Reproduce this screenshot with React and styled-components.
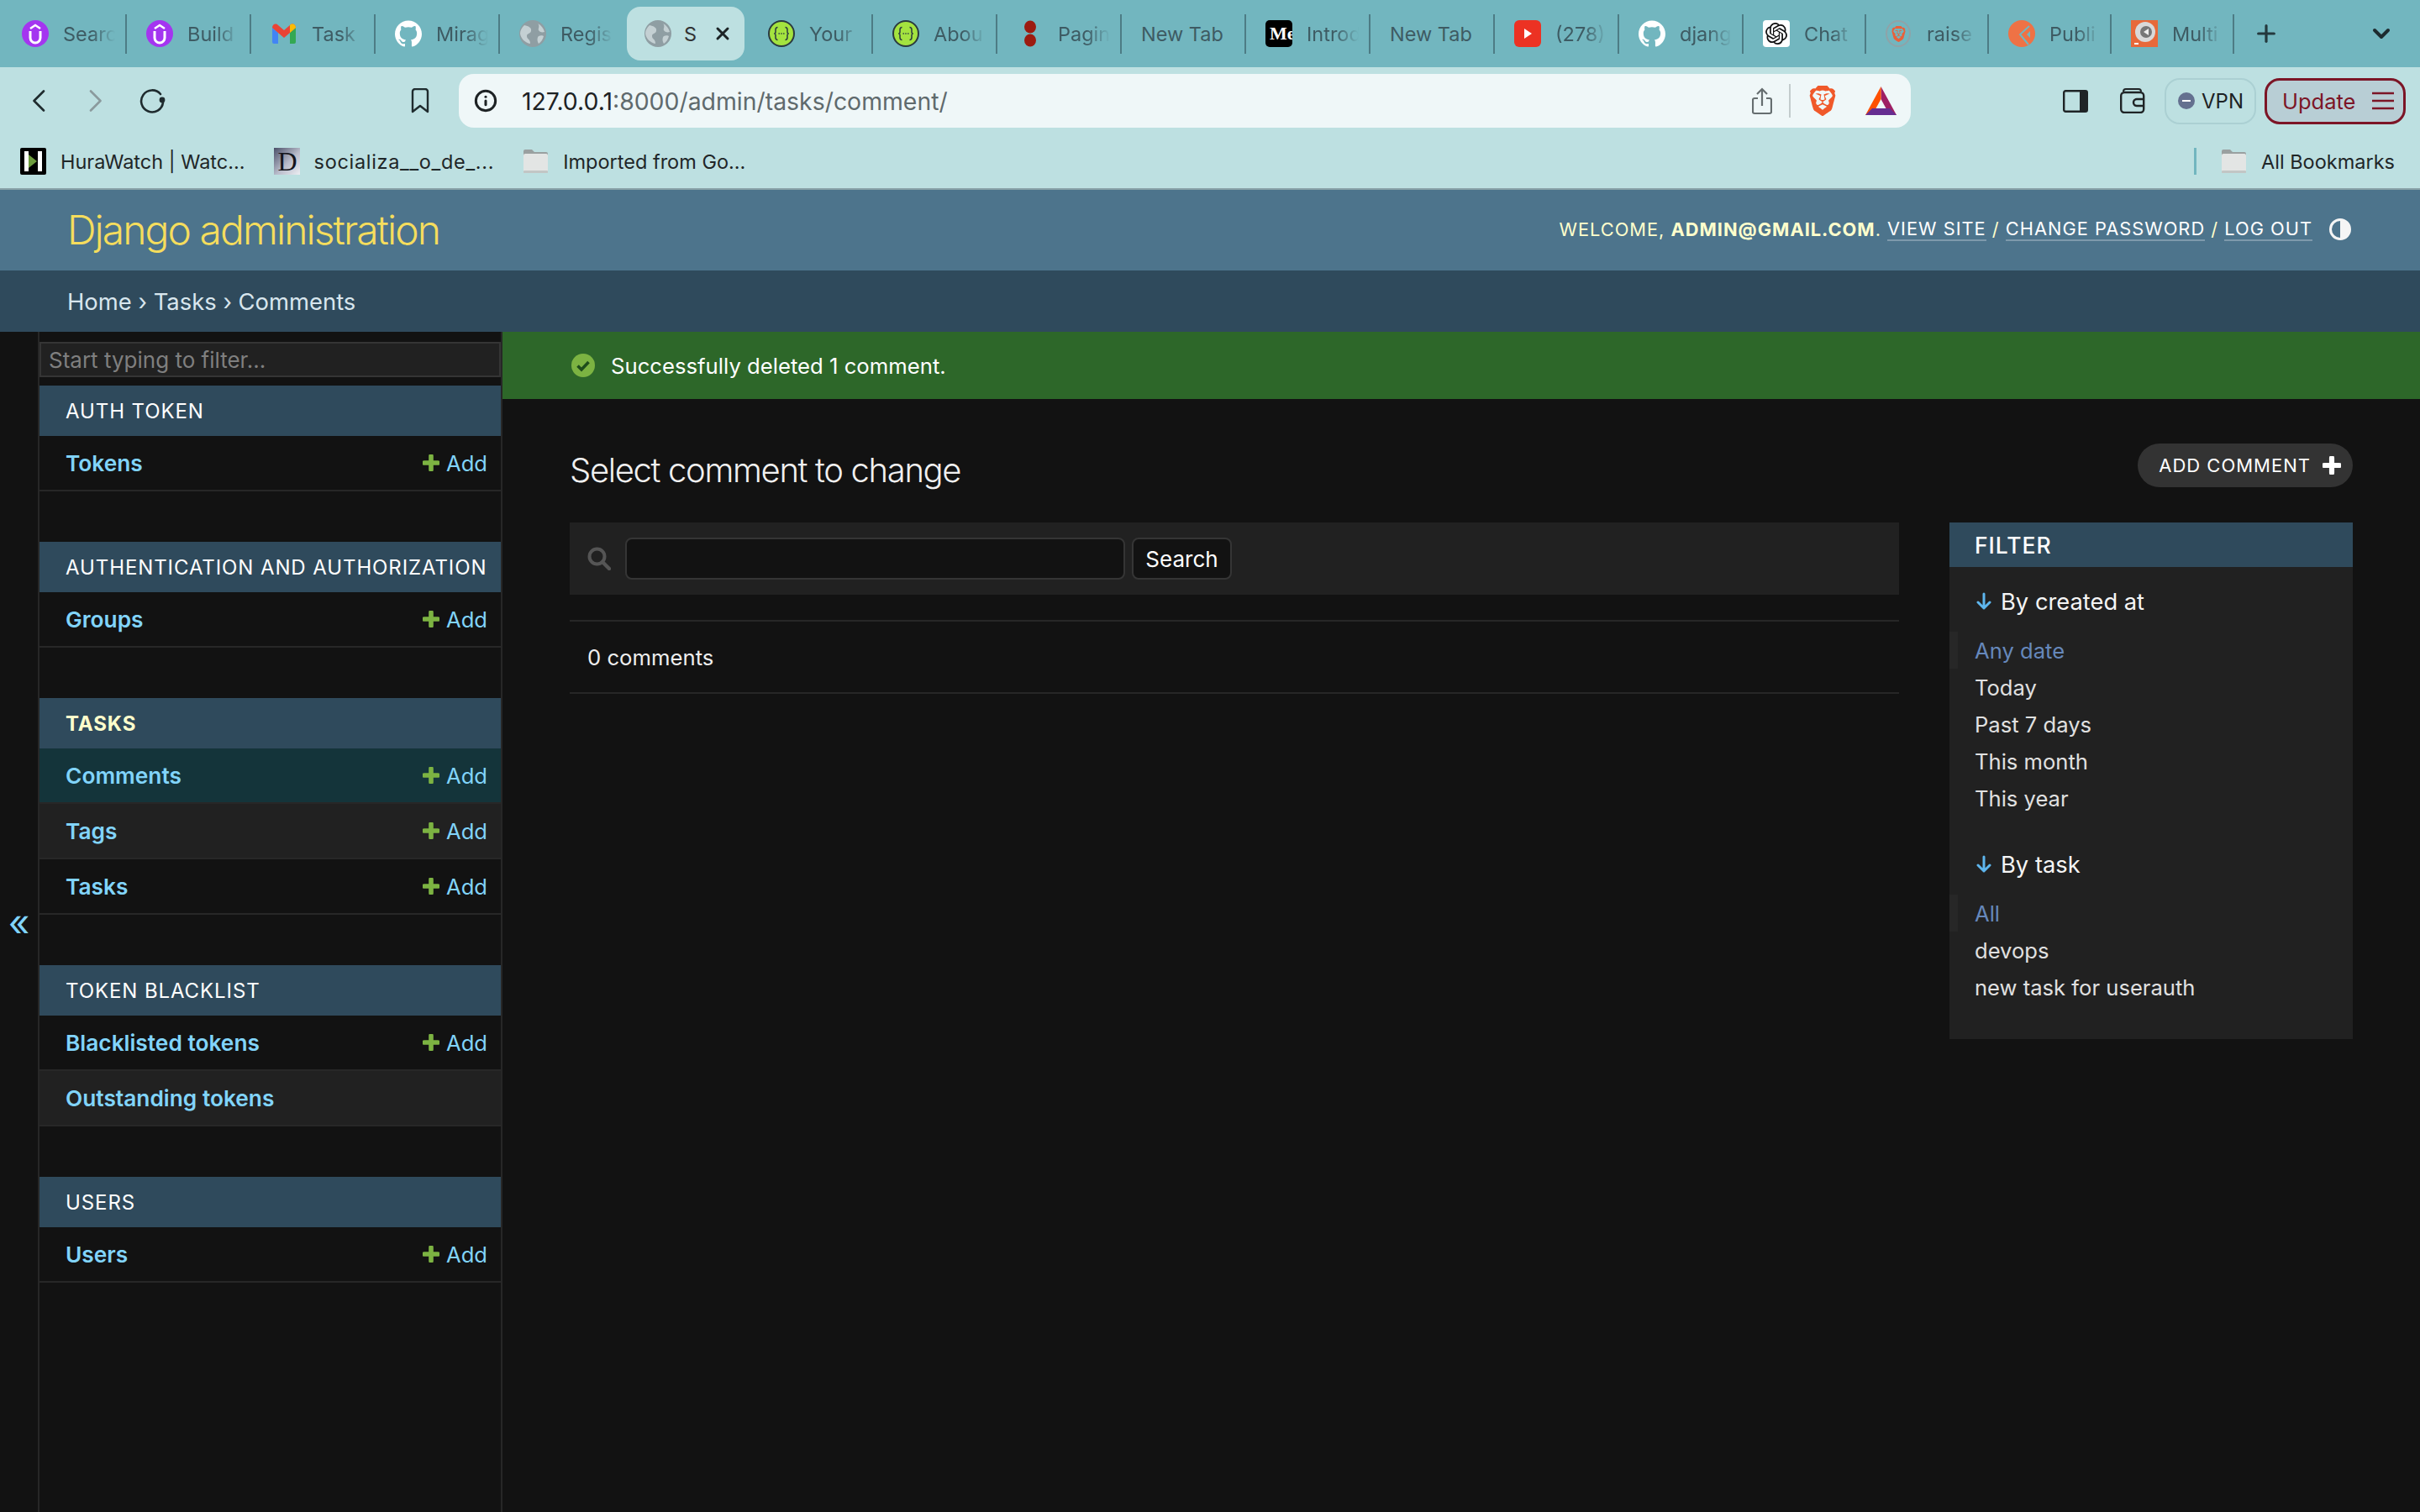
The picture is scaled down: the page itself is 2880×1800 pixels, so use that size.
import React from "react";
import styled, { createGlobalStyle } from "styled-components";
import { SiGithub, SiOpenai, SiBrave } from "react-icons/si";
import { X, Plus, ChevronDown, Info } from "lucide-react";

const GlobalStyle = createGlobalStyle`
  html, body {
    margin: 0;
    padding: 0;
    background: #121212;
  }
  body {
    font-family: Inter, "Liberation Sans", sans-serif;
    color: #eeeeee;
  }
  * {
    box-sizing: border-box;
  }
`;

const Page = styled.div`
  display: flex;
  flex-direction: column;
  width: 2880px;
  height: 1800px;
  overflow: hidden;
`;

/* browser chrome */
const TabStrip = styled.div`
  display: flex;
  align-items: center;
  height: 80px;
  padding-left: 3px;
  background: #72b6bf;
`;

const Tab = styled.div`
  display: flex;
  align-items: center;
  flex: none;
  gap: 17px;
  width: ${(p) => p.$width || 148}px;
  height: 47px;
  padding: 0 12px 0 23px;
  border-right: 2px solid ${(p) => (p.$noSep ? "transparent" : "#4d7c85")};
`;

const ActiveTab = styled.div`
  display: flex;
  align-items: center;
  flex: none;
  gap: 15px;
  width: 140px;
  height: 64px;
  margin: 0 5px 0 3px;
  padding: 0 14px 0 21px;
  border-radius: 16px;
  background: #bde0e1;
`;

const TabLabel = styled.span`
  flex: 1;
  overflow: hidden;
  font-size: 23.5px;
  white-space: nowrap;
  color: ${(p) => (p.$active ? "#333333" : "#3e5b63")};
  ${(p) =>
    p.$fade &&
    "mask-image: linear-gradient(to right, #000 55%, transparent 100%);"}
`;

const NewTabButton = styled.div`
  display: flex;
  margin-left: 22px;
  color: #24393e;
`;

const TabMenu = styled.div`
  display: flex;
  margin-left: 105px;
  color: #1d2b2f;
`;

const Chrome = styled.div`
  display: flex;
  flex-direction: column;
  height: 146px;
  border-bottom: 2px solid #8aa3a8;
  background: #bde0e1;
`;

const ToolRow = styled.div`
  display: flex;
  align-items: center;
  height: 80px;
`;

const NavGroup = styled.div`
  display: flex;
  align-items: center;
  flex: none;
  width: 546px;
  padding: 0 35px 0 38px;
  color: #1f2b2e;
`;

const NavButton = styled.div`
  display: flex;
  margin-right: ${(p) => p.$gap || 0}px;
`;

const BookmarkButton = styled.div`
  display: flex;
  margin-left: auto;
`;

const UrlBar = styled.div`
  display: flex;
  align-items: center;
  flex: none;
  width: 1728px;
  height: 64px;
  padding: 0 17px 0 18px;
  border-radius: 18px;
  background: #eff7f8;
`;

const UrlText = styled.div`
  flex: 1;
  margin-left: 29px;
  font-size: 28.4px;
  color: #5f6a6d;
`;

const UrlHost = styled.span`
  color: #1d2224;
`;

const UrlDivider = styled.div`
  width: 2px;
  height: 40px;
  margin: 0 20px;
  background: #c3cccd;
`;

const BatSlot = styled.div`
  display: flex;
  margin-left: 33px;
`;

const RightTools = styled.div`
  display: flex;
  align-items: center;
  justify-content: flex-end;
  flex: 1;
  padding-right: 17px;
`;

const WalletSlot = styled.div`
  display: flex;
  margin-left: 38px;
`;

const VpnPill = styled.div`
  display: flex;
  align-items: center;
  gap: 8px;
  width: 109px;
  height: 55px;
  margin: 0 10px 0 23px;
  padding-left: 14px;
  border: 2px solid #abd0d3;
  border-radius: 18px;
  font-size: 24px;
  color: #1d2224;
`;

const VpnDot = styled.span`
  display: flex;
  align-items: center;
  justify-content: center;
  width: 20px;
  height: 20px;
  border-radius: 50%;
  background: #64708f;
`;

const VpnDash = styled.span`
  width: 10px;
  height: 2px;
  background: #ffffff;
`;

const UpdateButton = styled.div`
  display: flex;
  align-items: center;
  justify-content: space-between;
  width: 168px;
  height: 55px;
  padding: 0 10px 0 18px;
  border: 3px solid #7c1526;
  border-radius: 18px;
  background: #b8ced5;
  font-size: 25.5px;
  color: #7c1526;
`;

const BookmarkRow = styled.div`
  display: flex;
  align-items: center;
  gap: 34px;
  height: 64px;
  padding: 0 30px 0 24px;
`;

const Bookmark = styled.div`
  display: flex;
  align-items: center;
  gap: 17px;
  font-size: 23.5px;
  letter-spacing: ${(p) => (p.$wide ? "0.68px" : "normal")};
  color: #1f2628;
`;

const BookmarkEnd = styled.div`
  display: flex;
  align-items: center;
  gap: 29px;
  margin-left: auto;
`;

const BookmarkSep = styled.div`
  width: 3px;
  height: 32px;
  background: #72b6bf;
`;

/* django header */
const Header = styled.header`
  display: flex;
  align-items: center;
  justify-content: space-between;
  height: 96px;
  padding: 0 82px 2px 80px;
  background: #4d748c;
`;

const Branding = styled.h1`
  margin: 0;
  font-size: 48px;
  font-weight: 300;
  letter-spacing: -1.95px;
  color: #f5dd5d;
`;

const UserTools = styled.div`
  display: flex;
  align-items: center;
  font-size: 21.8px;
  letter-spacing: 1px;
  text-transform: uppercase;
  color: #ffffcc;
  white-space: pre;
`;

const UserName = styled.strong`
  font-weight: 700;
`;

const UserLink = styled.a`
  border-bottom: 2px solid rgba(255, 255, 255, 0.28);
  color: #ffffff;
`;

const ThemeToggle = styled.svg`
  margin-left: 20px;
`;

const Breadcrumbs = styled.div`
  display: flex;
  align-items: center;
  height: 73px;
  padding-left: 80px;
  background: #2f4a5c;
  font-size: 27.4px;
  color: #d8e6ee;
`;

/* page body */
const Body = styled.div`
  display: flex;
  flex: 1;
  min-height: 0;
`;

const Toggle = styled.div`
  display: flex;
  align-items: center;
  justify-content: center;
  flex: none;
  width: 45px;
  font-size: 44px;
  color: #81d4fa;
`;

const Sidebar = styled.nav`
  flex: none;
  width: 553px;
  border-left: 2px solid #272727;
  border-right: 2px solid #272727;
`;

const FilterInput = styled.input`
  display: block;
  width: 100%;
  height: 42px;
  margin: 12px 0 10px;
  padding: 0 9px;
  border: 2px solid #353535;
  background: #212121;
  font-family: inherit;
  font-size: 26px;
  color: #eeeeee;

  &::placeholder {
    color: #7f7f7f;
  }
`;

const AppSection = styled.section`
  margin-bottom: 60px;
`;

const AppCaption = styled.div`
  display: flex;
  align-items: center;
  height: 60px;
  padding-left: 31px;
  background: #2f4a5c;
  font-size: 24px;
  font-weight: ${(p) => (p.$current ? 700 : 400)};
  letter-spacing: 0.9px;
  white-space: nowrap;
  color: ${(p) => (p.$current ? "#ffffcc" : "#ffffff")};
`;

const rowBackground = (p) => {
  if (p.$current) return "#14343a";
  return p.$striped ? "#212121" : "#121212";
};

const ModelRow = styled.div`
  display: flex;
  align-items: center;
  justify-content: space-between;
  height: 66px;
  padding: 0 16px 0 31px;
  border-bottom: 2px solid #272727;
  background: ${rowBackground};
`;

const ModelName = styled.a`
  font-size: 26.3px;
  font-weight: 600;
  color: #81d4fa;
`;

const AddLink = styled.a`
  display: flex;
  align-items: center;
  gap: 8px;
  font-size: 25.6px;
  color: #81d4fa;
`;

const Main = styled.main`
  display: flex;
  flex-direction: column;
  flex: 1;
  min-width: 0;
`;

const Message = styled.div`
  display: flex;
  align-items: center;
  gap: 19px;
  height: 80px;
  padding-left: 82px;
  background: #2d6729;
  font-size: 25.7px;
  color: #ffffff;
`;

const Content = styled.div`
  padding: 53px 80px 0 80px;
`;

const TitleRow = styled.div`
  display: flex;
  align-items: flex-start;
  justify-content: space-between;
  height: 94px;
`;

const Title = styled.h1`
  margin: 6px 0 0;
  font-size: 40px;
  font-weight: 300;
  line-height: 52px;
  letter-spacing: -1.35px;
  color: #f0f0f0;
`;

const AddButton = styled.a`
  display: flex;
  align-items: center;
  gap: 14px;
  height: 52px;
  padding: 0 14px 0 25px;
  border-radius: 26px;
  background: #333333;
  font-size: 22px;
  letter-spacing: 1px;
  color: #ffffff;
`;

const Columns = styled.div`
  display: flex;
  gap: 60px;
`;

const Results = styled.div`
  flex: 1;
  min-width: 0;
`;

const SearchBar = styled.div`
  display: flex;
  align-items: center;
  height: 86px;
  margin-bottom: 30px;
  padding-left: 21px;
  background: #212121;
`;

const SearchInput = styled.input`
  width: 595px;
  height: 50px;
  margin: 0 8px 0 17px;
  border: 2px solid #353535;
  border-radius: 8px;
  background: #121212;
`;

const SearchButton = styled.button`
  width: 119px;
  height: 50px;
  padding: 0;
  border: 2px solid #353535;
  border-radius: 8px;
  background: #121212;
  font-family: inherit;
  font-size: 26px;
  color: #ffffff;
`;

const Count = styled.div`
  display: flex;
  align-items: center;
  height: 88px;
  padding-left: 21px;
  border-top: 2px solid #272727;
  border-bottom: 2px solid #272727;
  font-size: 25.7px;
  color: #eeeeee;
`;

const FilterPanel = styled.aside`
  flex: none;
  width: 480px;
  padding-bottom: 40px;
  background: #212121;
`;

const FilterTitle = styled.div`
  display: flex;
  align-items: center;
  height: 53px;
  padding-left: 30px;
  background: #2f4a5c;
  font-size: 26.5px;
  font-weight: 500;
  letter-spacing: 1px;
  color: #ffffff;
`;

const FilterHeading = styled.div`
  display: flex;
  align-items: center;
  gap: 11px;
  height: 44px;
  margin: ${(p) => p.$top}px 0 14px;
  padding-left: 32px;
  font-size: 27.3px;
  color: #f5f5f5;
`;

const FilterItem = styled.div`
  display: flex;
  align-items: center;
  height: 44px;
  padding-left: ${(p) => (p.$selected ? 20 : 30)}px;
  border-left: ${(p) => (p.$selected ? "10px solid #272727" : "none")};
  font-size: 25.6px;
  color: ${(p) => (p.$selected ? "#6688bb" : "#e0e0e0")};
`;

/* favicons and small drawings */
const Svg = styled.svg`
  flex: none;
  display: block;
`;

const Udemy = () => (
  <Svg width="32" height="32" viewBox="0 0 32 32">
    <circle cx="16" cy="16" r="16" fill="#a435f0" />
    <path d="M10 13v8a6 6 0 0 0 12 0v-8" fill="none" stroke="#fff" strokeWidth="3" />
    <path d="M10 10l6-4 6 4" fill="none" stroke="#fff" strokeWidth="2.5" />
  </Svg>
);

const Gmail = () => (
  <Svg width="32" height="32" viewBox="0 0 32 32">
    <path d="M2 9v17a2 2 0 0 0 2 2h5V15z" fill="#4285f4" />
    <path d="M30 9v17a2 2 0 0 1-2 2h-5V15z" fill="#34a853" />
    <path d="M2 9c0-4 4-6 7-3l7 6 7-6c3-3 7-1 7 3l-7 6-7 6-7-6z" fill="#ea4335" />
    <path d="M23 6c3-3 7-1 7 3l-7 6z" fill="#fbbc04" />
  </Svg>
);

const GithubBox = styled.span`
  display: flex;
  flex: none;
  color: #ffffff;
`;

const Github = () => (
  <GithubBox>
    <SiGithub size={32} />
  </GithubBox>
);

const Globe = ({ color = "#8f9ea3" }) => (
  <Svg width="32" height="32" viewBox="0 0 32 32">
    <circle cx="16" cy="16" r="16" fill={color} />
    <path d="M6 6c5 1 9 3 8 7s-5 2-5 6 4 3 4 9c-6-1-11-6-12-12 0-4 2-7 5-10zM22 4c4 2 7 6 8 10-3 1-6 0-7-2s2-5-1-8zM23 19c2-1 5-1 6 0-1 4-3 7-6 9-2-3-2-7 0-9z" fill="#c4d0d3" />
  </Svg>
);

const ApiDoc = () => (
  <Svg width="32" height="32" viewBox="0 0 32 32">
    <circle cx="16" cy="16" r="15" fill="#a4e33f" stroke="#2b3a3f" strokeWidth="2" />
    <path d="M11.500 8.500c-2 0-2.500 1-2.500 3v2.500c0 1.300-.8 2-1.800 2 1 0 1.800.7 1.800 2v2.500c0 2 .5 3 2.500 3M20.500 8.500c2 0 2.500 1 2.500 3v2.500c0 1.300.8 2 1.800 2-1 0-1.800.7-1.800 2v2.500c0 2-.5 3-2.500 3" fill="none" stroke="#2b3a3f" strokeWidth="1.500" />
    <path d="M12.500 16h1.400M15.300 16h1.400M18.100 16h1.400" stroke="#2b3a3f" strokeWidth="1.600" />
  </Svg>
);

const RedDots = () => (
  <Svg width="32" height="32" viewBox="0 0 32 32">
    <ellipse cx="16" cy="8" rx="7" ry="7.5" fill="#9c1b10" />
    <ellipse cx="16" cy="24" rx="7" ry="7.5" fill="#9c1b10" />
  </Svg>
);

const MediumBox = styled.span`
  display: block;
  flex: none;
  overflow: hidden;
  width: 32px;
  height: 32px;
  padding: 5px 0 0 5px;
  border-radius: 5px;
  background: #000000;
  font-family: "Liberation Serif", serif;
  font-size: 22px;
  font-weight: 700;
  line-height: 22px;
  white-space: nowrap;
  color: #ffffff;
`;

const Medium = () => <MediumBox>Me</MediumBox>;

const Youtube = () => (
  <Svg width="32" height="32" viewBox="0 0 32 32">
    <rect y="0" width="32" height="32" rx="6" fill="#ec3223" />
    <path d="M12 10l9 6-9 6z" fill="#fff" />
  </Svg>
);

const OpenAiBox = styled.span`
  display: flex;
  align-items: center;
  justify-content: center;
  flex: none;
  width: 32px;
  height: 32px;
  border-radius: 4px;
  background: #ffffff;
  color: #111111;
`;

const ChatGpt = () => (
  <OpenAiBox>
    <SiOpenai size={26} />
  </OpenAiBox>
);

const BraveRing = styled.span`
  display: flex;
  align-items: center;
  justify-content: center;
  flex: none;
  width: 30px;
  height: 32px;
  margin-right: 2px;
  border: 2px solid #8fa3a8;
  border-radius: 50%;
  color: #e9603a;
`;

const BraveTab = () => (
  <BraveRing>
    <SiBrave size={19} />
  </BraveRing>
);

const OrangeMark = () => (
  <Svg width="32" height="32" viewBox="0 0 32 32">
    <circle cx="16" cy="16" r="16" fill="#ef7245" />
    <path d="M25 7L14 17l10 12" fill="none" stroke="#72b6bf" strokeWidth="2" />
    <path d="M26 13l-4 4 4 4z" fill="#72b6bf" />
  </Svg>
);

const OrangeSquare = () => (
  <Svg width="32" height="32" viewBox="0 0 32 32">
    <rect width="32" height="32" fill="#e8693a" />
    <circle cx="17" cy="14" r="12" fill="#d9d9d9" />
    <circle cx="18" cy="14" r="7" fill="#777777" />
    <path d="M15 14l6-4v8z" fill="#eeeeee" />
    <path d="M4 27h5v2H4z" fill="#ffffff" />
  </Svg>
);

const HuraIcon = () => (
  <Svg width="31" height="32" viewBox="0 0 31 32">
    <rect width="31" height="32" rx="2" fill="#000" />
    <rect x="5" y="4" width="5" height="24" fill="#fff" />
    <rect x="21" y="4" width="5" height="24" fill="#fff" />
    <path d="M10 8l10 8-10 8z" fill="#6d9c3d" />
  </Svg>
);

const DocBox = styled.span`
  display: block;
  flex: none;
  width: 31px;
  height: 32px;
  padding-left: 5px;
  background: linear-gradient(135deg, #4a4f68 0%, #b9bccb 55%, #eceef2 100%);
  font-family: "Liberation Serif", serif;
  font-size: 32px;
  line-height: 32px;
  letter-spacing: normal;
  color: #15151c;
`;

const Folder = () => (
  <Svg width="31" height="32" viewBox="0 0 31 32">
    <path d="M1 4a2 2 0 0 1 2-2h8l3 3h14a2 2 0 0 1 2 2v21a2 2 0 0 1-2 2H3a2 2 0 0 1-2-2z" fill="#9aa0a0" />
    <rect x="1" y="7" width="29" height="23" rx="2" fill="#e3e5e4" />
    <rect x="1" y="27" width="29" height="3" rx="1" fill="#c2c6c5" />
  </Svg>
);

const BackIcon = () => (
  <Svg width="16" height="26" viewBox="0 0 16 26">
    <path d="M14 1.500L2.500 13 14 24.500" fill="none" stroke="#1f2b2e" strokeWidth="2.6" strokeLinecap="round" strokeLinejoin="round" />
  </Svg>
);

const ForwardIcon = () => (
  <Svg width="16" height="26" viewBox="0 0 16 26">
    <path d="M2 1.500L13.500 13 2 24.500" fill="none" stroke="#8b9a9d" strokeWidth="2.6" strokeLinecap="round" strokeLinejoin="round" />
  </Svg>
);

const ReloadIcon = () => (
  <Svg width="31" height="30" viewBox="0 0 31 30">
    <path d="M25 7a13 13 0 1 0 3 10" fill="none" stroke="#1f2b2e" strokeWidth="2.6" strokeLinecap="round" />
    <circle cx="27" cy="14" r="3.4" fill="#1f2b2e" />
  </Svg>
);

const BookmarkIcon = () => (
  <Svg width="22" height="30" viewBox="0 0 22 30">
    <path d="M2 4a3 3 0 0 1 3-3h12a3 3 0 0 1 3 3v24l-9-7-9 7z" fill="none" stroke="#1f2b2e" strokeWidth="2.4" strokeLinejoin="round" />
  </Svg>
);

const ShareIcon = () => (
  <Svg width="24" height="33" viewBox="0 0 24 33">
    <path d="M7 13H3a2 2 0 0 0-2 2v14a2 2 0 0 0 2 2h18a2 2 0 0 0 2-2V15a2 2 0 0 0-2-2h-4" fill="none" stroke="#666e70" strokeWidth="2.2" />
    <path d="M12 22V2M6 8l6-6 6 6" fill="none" stroke="#666e70" strokeWidth="2.2" />
  </Svg>
);

const LionBox = styled.span`
  display: flex;
  flex: none;
  color: #f0592a;
`;

const BraveLion = () => (
  <LionBox>
    <SiBrave size={36} />
  </LionBox>
);

const BatIcon = () => (
  <Svg width="37" height="34" viewBox="0 0 37 34">
    <path d="M18.500 0L37 34H26L18.500 17z" fill="#9e1f63" />
    <path d="M18.500 0L0 34h11l7.500-17z" fill="#ff5000" />
    <path d="M0 34h37l-8-8H8z" fill="#662d91" />
    <path d="M18.500 15l6 11h-12z" fill="#eff7f8" />
  </Svg>
);

const SidePanelIcon = () => (
  <Svg width="30" height="27" viewBox="0 0 30 27">
    <rect x="1.200" y="1.200" width="27.600" height="24.600" rx="2" fill="none" stroke="#1f2426" strokeWidth="2.4" />
    <rect x="20" y="1" width="9" height="25" fill="#1f2426" />
  </Svg>
);

const WalletIcon = () => (
  <Svg width="30" height="30" viewBox="0 0 30 30">
    <path d="M4 4a3 3 0 0 1 3-3h15a3 3 0 0 1 3 3" fill="none" stroke="#1f2426" strokeWidth="2" />
    <rect x="1.200" y="5" width="27" height="24" rx="4" fill="none" stroke="#1f2426" strokeWidth="2.4" />
    <path d="M29 13h-9a4 4 0 0 0 0 8h9" fill="none" stroke="#1f2426" strokeWidth="2.4" />
  </Svg>
);

const MenuIcon = () => (
  <Svg width="28" height="24" viewBox="0 0 28 24">
    <path d="M1 3h26M1 12h26M1 21h26" stroke="#7c1526" strokeWidth="2.4" />
  </Svg>
);

const CheckBadge = () => (
  <Svg width="28" height="28" viewBox="0 0 28 28">
    <circle cx="14" cy="14" r="14" fill="#7cb342" />
    <path d="M7.500 14.500l4.500 4.500 8.500-9" fill="none" stroke="#1e4d1b" strokeWidth="3.6" />
  </Svg>
);

const CrossIcon = ({ color = "#7cb342", size = 20 }) => (
  <Svg width={size} height={size} viewBox="0 0 20 20">
    <path d="M10 2v16M2 10h16" stroke={color} strokeWidth="5.600" strokeLinecap="round" />
  </Svg>
);

const SearchGlass = () => (
  <Svg width="28" height="28" viewBox="0 0 28 28">
    <circle cx="11.500" cy="11.500" r="9" fill="none" stroke="#555555" strokeWidth="4" />
    <path d="M18 18l8 8" stroke="#555555" strokeWidth="4.500" strokeLinecap="round" />
  </Svg>
);

const ArrowDown = () => (
  <Svg width="18" height="22" viewBox="0 0 18 22">
    <path d="M9 2v17M2 12l7 7 7-7" fill="none" stroke="#5eb6ee" strokeWidth="3" strokeLinecap="round" strokeLinejoin="round" />
  </Svg>
);

const ContrastIcon = () => (
  <ThemeToggle width="26" height="26" viewBox="0 0 26 26">
    <circle cx="13" cy="13" r="11.500" fill="none" stroke="#f5f5f5" strokeWidth="3" />
    <path d="M13 1.500a11.500 11.500 0 0 1 0 23z" fill="#f5f5f5" />
  </ThemeToggle>
);

const tabs = [
  { label: "Searc", icon: Udemy },
  { label: "Build", icon: Udemy },
  { label: "Task", icon: Gmail },
  { label: "Mirag", icon: Github },
  { label: "Regis", icon: Globe, noSep: true },
  { active: true, label: "S", icon: Globe },
  { label: "Your", icon: ApiDoc },
  { label: "Abou", icon: ApiDoc },
  { label: "Pagin", icon: RedDots },
  { label: "New Tab" },
  { label: "Introd", icon: Medium },
  { label: "New Tab" },
  { label: "(278)", icon: Youtube },
  { label: "djang", icon: Github },
  { label: "Chat", icon: ChatGpt, width: 146 },
  { label: "raise", icon: BraveTab, width: 146 },
  { label: "Publi", icon: OrangeMark, width: 146 },
  { label: "Multi", icon: OrangeSquare, width: 146 },
];

const apps = [
  { name: "AUTH TOKEN", models: [{ name: "Tokens" }] },
  { name: "AUTHENTICATION AND AUTHORIZATION", models: [{ name: "Groups" }] },
  {
    name: "TASKS",
    current: true,
    models: [
      { name: "Comments", current: true },
      { name: "Tags", striped: true },
      { name: "Tasks" },
    ],
  },
  {
    name: "TOKEN BLACKLIST",
    models: [
      { name: "Blacklisted tokens" },
      { name: "Outstanding tokens", striped: true, noAdd: true },
    ],
  },
  { name: "USERS", models: [{ name: "Users" }] },
];

const filters = [
  {
    title: "By created at",
    top: 19,
    items: ["Any date", "Today", "Past 7 days", "This month", "This year"],
  },
  {
    title: "By task",
    top: 35,
    items: ["All", "devops", "new task for userauth"],
  },
];

function BrowserTabs() {
  return (
    <TabStrip>
      {tabs.map((tab, i) => {
        const Icon = tab.icon;
        if (tab.active) {
          return (
            <ActiveTab key={i}>
              <Icon />
              <TabLabel $active>{tab.label}</TabLabel>
              <X size={24} color="#1c2426" strokeWidth={3} />
            </ActiveTab>
          );
        }
        return (
          <Tab key={i} $width={tab.width} $noSep={tab.noSep}>
            {Icon && <Icon />}
            <TabLabel $fade={Boolean(Icon)}>{tab.label}</TabLabel>
          </Tab>
        );
      })}
      <NewTabButton>
        <Plus size={32} strokeWidth={2.4} />
      </NewTabButton>
      <TabMenu>
        <ChevronDown size={32} strokeWidth={3} />
      </TabMenu>
    </TabStrip>
  );
}

function BrowserToolbar() {
  return (
    <Chrome>
      <ToolRow>
        <NavGroup>
          <NavButton $gap={52}>
            <BackIcon />
          </NavButton>
          <NavButton $gap={44}>
            <ForwardIcon />
          </NavButton>
          <ReloadIcon />
          <BookmarkButton>
            <BookmarkIcon />
          </BookmarkButton>
        </NavGroup>
        <UrlBar>
          <Info size={28} color="#1d2224" strokeWidth={2.6} />
          <UrlText>
            <UrlHost>127.0.0.1</UrlHost>:8000/admin/tasks/comment/
          </UrlText>
          <ShareIcon />
          <UrlDivider />
          <BraveLion />
          <BatSlot>
            <BatIcon />
          </BatSlot>
        </UrlBar>
        <RightTools>
          <SidePanelIcon />
          <WalletSlot>
            <WalletIcon />
          </WalletSlot>
          <VpnPill>
            <VpnDot>
              <VpnDash />
            </VpnDot>
            VPN
          </VpnPill>
          <UpdateButton>
            Update
            <MenuIcon />
          </UpdateButton>
        </RightTools>
      </ToolRow>
      <BookmarkRow>
        <Bookmark>
          <HuraIcon />
          HuraWatch | Watc...
        </Bookmark>
        <Bookmark $wide>
          <DocBox>D</DocBox>
          socializa__o_de_...
        </Bookmark>
        <Bookmark>
          <Folder />
          Imported from Go...
        </Bookmark>
        <BookmarkEnd>
          <BookmarkSep />
          <Bookmark>
            <Folder />
            All Bookmarks
          </Bookmark>
        </BookmarkEnd>
      </BookmarkRow>
    </Chrome>
  );
}

function AppList() {
  return (
    <Sidebar>
      <FilterInput placeholder="Start typing to filter..." />
      {apps.map((app) => (
        <AppSection key={app.name}>
          <AppCaption $current={app.current}>{app.name}</AppCaption>
          {app.models.map((model) => (
            <ModelRow key={model.name} $current={model.current} $striped={model.striped}>
              <ModelName>{model.name}</ModelName>
              {!model.noAdd && (
                <AddLink>
                  <CrossIcon />
                  Add
                </AddLink>
              )}
            </ModelRow>
          ))}
        </AppSection>
      ))}
    </Sidebar>
  );
}

function FilterSidebar() {
  return (
    <FilterPanel>
      <FilterTitle>FILTER</FilterTitle>
      {filters.map((filter) => (
        <div key={filter.title}>
          <FilterHeading $top={filter.top}>
            <ArrowDown />
            {filter.title}
          </FilterHeading>
          {filter.items.map((item, i) => (
            <FilterItem key={item} $selected={i === 0}>
              {item}
            </FilterItem>
          ))}
        </div>
      ))}
    </FilterPanel>
  );
}

export default function App() {
  return (
    <Page>
      <GlobalStyle />
      <BrowserTabs />
      <BrowserToolbar />
      <Header>
        <Branding>Django administration</Branding>
        <UserTools>
          Welcome, <UserName>admin@gmail.com</UserName>. <UserLink>View site</UserLink> / <UserLink>Change password</UserLink> / <UserLink>Log out</UserLink>
          <ContrastIcon />
        </UserTools>
      </Header>
      <Breadcrumbs>Home › Tasks › Comments</Breadcrumbs>
      <Body>
        <Toggle>«</Toggle>
        <AppList />
        <Main>
          <Message>
            <CheckBadge />
            Successfully deleted 1 comment.
          </Message>
          <Content>
            <TitleRow>
              <Title>Select comment to change</Title>
              <AddButton>
                ADD COMMENT
                <CrossIcon color="#ffffff" size={22} />
              </AddButton>
            </TitleRow>
            <Columns>
              <Results>
                <SearchBar>
                  <SearchGlass />
                  <SearchInput />
                  <SearchButton>Search</SearchButton>
                </SearchBar>
                <Count>0 comments</Count>
              </Results>
              <FilterSidebar />
            </Columns>
          </Content>
        </Main>
      </Body>
    </Page>
  );
}
